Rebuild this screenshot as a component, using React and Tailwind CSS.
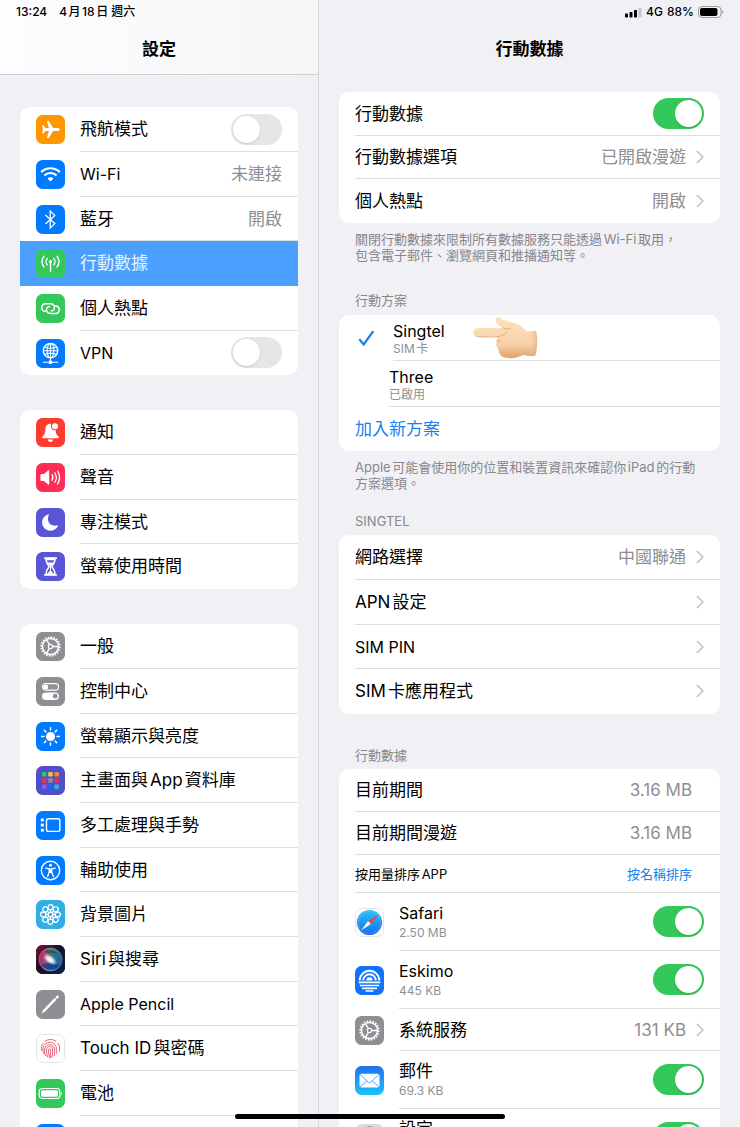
import { useState } from 'react'
import clsx from 'clsx'

const petals = [0, 45, 90, 135, 180, 225, 270, 315]

function Gear() {
  return (
    <g fill="none" stroke="#fff">
      <circle cx="14.5" cy="14.5" r="8" strokeWidth="1.5" />
      <circle cx="14.5" cy="14.5" r="9.4" strokeWidth="1.6" pathLength="80" strokeDasharray="2.2 1.8" />
      <circle cx="14.5" cy="14.5" r="2.1" strokeWidth="1.2" />
      <path d="M16.6 14.5h5.9M13.4 12.7l-2.9-5M13.4 16.3l-2.9 5" strokeWidth="1.3" />
    </g>
  )
}

const icons = {
  airplane: {
    bg: '#ff9500',
    art: <path fill="#fff" d="M24 14.5c0-1-1.3-1.6-2.8-1.6h-4.1L12.8 6h-1.9l2 6.9H9.4l-1.8-2.4H6.1l.9 4-.9 4h1.5l1.8-2.4h3.5l-2 6.9h1.9l4.3-6.9h4.1c1.5 0 2.8-.6 2.8-1.6z" />,
  },
  wifi: {
    bg: '#007aff',
    art: (
      <g fill="none" stroke="#fff" strokeWidth="2.2">
        <path d="M5.2 12.1a13.2 13.2 0 0 1 18.6 0" />
        <path d="M8.4 15.5a8.7 8.7 0 0 1 12.2 0" />
        <path d="M11.5 18.6a4.3 4.3 0 0 1 6 0l-3 3z" fill="#fff" stroke="none" />
      </g>
    ),
  },
  bluetooth: {
    bg: '#007aff',
    art: <path fill="none" stroke="#fff" strokeWidth="1.3" d="M9.4 10.1l9.4 8.5-4.6 4.3V6.1l4.6 4.3-9.4 8.5" />,
  },
  cellular: {
    bg: '#34c759',
    art: (
      <g fill="none" stroke="#fff" strokeWidth="1.4" strokeLinecap="round">
        <circle cx="14.5" cy="12.6" r="1.6" fill="#fff" stroke="none" />
        <path d="M14.5 13v9.2M11.3 9.6a4.4 4.4 0 0 0 0 6.2M17.7 9.6a4.4 4.4 0 0 1 0 6.2M8 7.3a8 8 0 0 0 0 10.6M21 7.3a8 8 0 0 1 0 10.6" />
      </g>
    ),
  },
  hotspot: {
    bg: '#34c759',
    art: (
      <g fill="none" stroke="#fff" strokeWidth="1.5" strokeLinecap="round">
        <path d="M10.2 17.2H8.9a3.8 3.8 0 0 1 0-7.5h5.9a3.8 3.8 0 0 1 3.3 5.6c-.6 1-1.5 1.4-2.6 1.6" />
        <path d="M18.8 12.1h1.3a3.8 3.8 0 0 1 0 7.5h-5.9a3.8 3.8 0 0 1-3.3-5.6c.6-1 1.5-1.4 2.6-1.6" />
      </g>
    ),
  },
  vpn: {
    bg: '#007aff',
    art: (
      <g fill="none" stroke="#fff" strokeWidth="1.1">
        <circle cx="14.5" cy="11.7" r="7.2" strokeWidth="1.4" />
        <ellipse cx="14.5" cy="11.7" rx="3.4" ry="7.2" />
        <path d="M7.3 11.7h14.4M8.6 8c3.6 1.6 8.2 1.6 11.8 0M8.6 15.4c3.6-1.6 8.2-1.6 11.8 0M14.5 4.5v18M6.8 23.3h15.4" />
        <rect x="12.9" y="21.7" width="3.2" height="3.2" fill="#fff" stroke="none" />
      </g>
    ),
  },
  bell: {
    bg: '#ff3b30',
    art: (
      <g fill="#fff">
        <path d="M14.3 5.6c-3.4.4-5 2.8-5 6 0 4.3-1.2 5.4-2.9 7.2-.6.7-.2 1.5.7 1.5h14.8c.9 0 1.3-.8.7-1.5-1.7-1.8-2.9-2.900-2.900-7.200z" />
        <path d="M12 21.6h5c0 1.4-1.1 2.3-2.5 2.3S12 23 12 21.6z" />
        <circle cx="19" cy="8.2" r="4" fill="#ff3b30" />
        <circle cx="19" cy="8.2" r="3" />
      </g>
    ),
  },
  speaker: {
    bg: '#ff2d55',
    art: (
      <g fill="none" stroke="#fff" strokeWidth="1.3" strokeLinecap="round">
        <path d="M4.4 12v5c0 .6.3.9.9.9h2.6l4.3 3.6c.5.4 1 .2 1-.4V7.900c0-.6-.5-.8-1-.4l-4.3 3.6H5.300c-.6 0-.9.3-.9.9z" fill="#fff" stroke="none" />
        <path d="M16 11.7a5 5 0 0 1 0 5.6M18.8 9.8a8.6 8.6 0 0 1 0 9.4M21.6 8a12.4 12.4 0 0 1 0 13" />
      </g>
    ),
  },
  moon: {
    bg: '#5856d6',
    art: <path fill="#fff" d="M12.2 6.2c.4-.2.8.1.6.6-2.7 6.8 1.6 12.3 8.6 10.500.5-.1.8.2.6.6-3 6.3-12 6.3-15 .3-2.200-4.500-.3-10 5.200-12z" />,
  },
  hourglass: {
    bg: '#5856d6',
    art: (
      <g fill="none" stroke="#fff" strokeWidth="1.5" strokeLinejoin="round">
        <path d="M8.8 6.2h11.4M8.8 22.8h11.4" strokeWidth="1.8" strokeLinecap="round" />
        <path d="M10 6.5c0 4.5 1.2 5.7 3.3 8-2.1 2.3-3.3 3.5-3.3 8h9c0-4.5-1.2-5.7-3.3-8 2.1-2.3 3.3-3.5 3.3-8z" />
        <path d="M11.4 10.5h6.2l-3.1 4zM11 21.8l3.5-3.3 3.5 3.3zM10.5 7h8v1.2h-8z" fill="#fff" stroke="none" />
        <path d="M14.5 14v5" strokeWidth="1" />
      </g>
    ),
  },
  gear: { bg: '#8e8e93', art: <Gear /> },
  control: {
    bg: '#8e8e93',
    art: (
      <g>
        <rect x="6.5" y="6.7" width="16" height="6.4" rx="3.2" fill="none" stroke="#fff" strokeWidth="1.2" />
        <circle cx="9.7" cy="9.9" r="2.5" fill="#fff" />
        <rect x="6" y="15.5" width="17" height="7.4" rx="3.7" fill="#fff" />
        <circle cx="19.2" cy="19.2" r="2.4" fill="#8e8e93" />
      </g>
    ),
  },
  sun: {
    bg: '#007aff',
    art: (
      <g fill="#fff" stroke="#fff" strokeWidth="1.5" strokeLinecap="round">
        <circle cx="14.5" cy="14.5" r="3.8" />
        {petals.map((a) => (
          <path key={a} d="M14.5 5.700v2.300" transform={`rotate(${a} 14.5 14.5)`} />
        ))}
      </g>
    ),
  },
  home: {
    bg: '#4f4fce',
    art: (
      <g>
        {['#34c759', '#f7c52b', '#f58a1f', '#ef3340', '#8e8e93', '#f02d55', '#a952dc', '#0a6cff', '#2fb5c4'].map((c, i) => (
          <rect key={c} x={6 + (i % 3) * 6.2} y={6 + Math.floor(i / 3) * 6.2} width="4.6" height="4.6" rx="1" fill={c} />
        ))}
      </g>
    ),
  },
  stage: {
    bg: '#007aff',
    art: (
      <g fill="#fff">
        <rect x="10.5" y="7.8" width="13.4" height="12.6" rx="2" fill="none" stroke="#fff" strokeWidth="1.4" />
        <rect x="4.8" y="7.5" width="3" height="3" rx=".7" />
        <rect x="4.8" y="12.6" width="3" height="3" rx=".7" />
        <rect x="4.8" y="17.7" width="3" height="3" rx=".7" />
      </g>
    ),
  },
  accessibility: {
    bg: '#007aff',
    art: (
      <g fill="none" stroke="#fff" strokeLinecap="round" strokeLinejoin="round">
        <circle cx="14.5" cy="14.5" r="9.2" strokeWidth="1.4" />
        <circle cx="14.5" cy="9.3" r="1.5" fill="#fff" stroke="none" />
        <path d="M9.7 12.1l3.5.7v3.2l-1.600 4.500M19.300 12.100l-3.500.7v3.200l1.600 4.500" strokeWidth="1.3" />
        <path d="M13 12.5h3V17h-3z" fill="#fff" stroke="none" />
      </g>
    ),
  },
  wallpaper: {
    bg: '#32ade6',
    art: (
      <g fill="none" stroke="#fff" strokeWidth="1.3">
        <circle cx="14.5" cy="14.5" r="2.3" />
        {petals.map((a) => (
          <ellipse key={a} cx="14.5" cy="7.2" rx="2.5" ry="2.6" transform={`rotate(${a} 14.5 14.5)`} />
        ))}
        {petals.map((a) => (
          <path key={a} d="M14.5 10.1v2" transform={`rotate(${a} 14.5 14.5)`} />
        ))}
      </g>
    ),
  },
  siri: {
    bg: '#140f24',
    art: (
      <g>
        <defs>
          <clipPath id="siriClip"><rect width="29" height="29" rx="6.5" /></clipPath>
          <linearGradient id="siriBack" x1="0" y1="0" x2="1" y2="1">
            <stop offset="0" stopColor="#7d1038" />
            <stop offset=".45" stopColor="#1a1226" />
            <stop offset="1" stopColor="#06264a" />
          </linearGradient>
          <linearGradient id="siriOrb" x1="0" y1=".4" x2="1" y2=".6">
            <stop offset="0" stopColor="#d02565" />
            <stop offset=".35" stopColor="#b0688c" />
            <stop offset=".6" stopColor="#2f8f8e" />
            <stop offset="1" stopColor="#1b63c9" />
          </linearGradient>
          <radialGradient id="siriGlow">
            <stop offset="0" stopColor="#fff" />
            <stop offset=".4" stopColor="#fff" stopOpacity=".85" />
            <stop offset="1" stopColor="#fff" stopOpacity="0" />
          </radialGradient>
        </defs>
        <g clipPath="url(#siriClip)">
          <rect width="29" height="29" fill="url(#siriBack)" />
          <circle cx="14.5" cy="14.5" r="11.5" fill="url(#siriOrb)" opacity=".85" />
          <path d="M5 20c5 6 14 6 19 0-6 0-12-4-19 0z" fill="#123a9c" opacity=".8" />
          <path d="M8 7c4-3 10-3 14 2-5-1-9 0-14-2z" fill="#0d5c4b" opacity=".8" />
          <ellipse cx="14" cy="14.5" rx="8" ry="4.2" fill="url(#siriGlow)" transform="rotate(35 14 14.5)" />
          <circle cx="14.5" cy="14.5" r="11.5" fill="none" stroke="#b9b6c8" strokeWidth=".6" opacity=".7" />
        </g>
      </g>
    ),
  },
  pencil: {
    bg: '#8e8e93',
    art: (
      <g stroke="#fff" strokeLinecap="round">
        <path d="M8 20.8L19 9.4" strokeWidth="2.4" />
        <path d="M20.8 7.6l.9-.9" strokeWidth="2.4" />
        <path d="M6.4 22.5l1.6-1.7" strokeWidth="1.2" />
      </g>
    ),
  },
  touchid: {
    bg: '#ffffff',
    border: true,
    art: (
      <g fill="none" stroke="#ee5d78" strokeWidth="1" strokeLinecap="round">
        <path d="M9 7.2a9 9 0 0 1 11 0M5.6 16.5c-.8-2.5-.3-5.2 1.6-7.4M7.6 19.5c-1.3-4.5-.8-7.8 2.2-9.9 3.6-2.4 8.6-1.2 10.2 3 .5 1.5.6 3.6.4 6.700M22 9.400c1.600 2.300 1.900 4.500 1.500 7.800" />
        <path d="M9.500 21.600c-1-3-1.600-6.200-.2-8.600 2-3.200 6.700-3 8.500.1 1.200 2.200.9 5.600.4 8.600" />
        <path d="M11.600 22.900c-.8-2.700-1.700-5.800-.9-8.300 1-2.600 4.600-2.800 5.600-.3.7 2 .3 6-.4 9.100" />
        <path d="M13.700 23.700c-.5-2.300-1.400-5.400-1.200-7.900.2-1.400 1.900-1.300 2.100 0 .2 2 .1 4.600-.2 7.600" />
      </g>
    ),
  },
  battery: {
    bg: '#34c759',
    art: (
      <g fill="#fff">
        <rect x="3.2" y="9.5" width="20.6" height="10" rx="3" fill="none" stroke="#fff" strokeWidth="1.2" />
        <rect x="5" y="11.3" width="17" height="6.4" rx="1.5" />
        <path d="M24.9 12.5c1.3.5 1.3 3.5 0 4z" />
      </g>
    ),
  },
  privacy: { bg: '#007aff', art: null },
  safari: {
    bg: '#ffffff',
    border: true,
    art: (
      <g>
        <defs>
          <linearGradient id="safariSky" x1="0" y1="0" x2="0" y2="1">
            <stop offset="0" stopColor="#27c4f5" />
            <stop offset="1" stopColor="#1a6bf0" />
          </linearGradient>
        </defs>
        <circle cx="14.5" cy="14.5" r="12.6" fill="url(#safariSky)" />
        <circle cx="14.5" cy="14.5" r="11" fill="none" stroke="#fff" strokeWidth="1.2" opacity=".55" pathLength="120" strokeDasharray=".7 2.3" />
        <path d="M22.8 7l-9.7 6.1 2.7 2.8z" fill="#f0413a" />
        <path d="M6.4 22.3l6.7-9.2 2.7 2.8z" fill="#fff" />
      </g>
    ),
  },
  eskimo: {
    bg: '#0f74fb',
    art: (
      <g fill="none" stroke="#fff" strokeWidth="1.9">
        <path d="M4.7 14.5a9.8 9.8 0 0 1 19.6 0M8.2 14.5a6.3 6.3 0 0 1 12.6 0" />
        <path d="M11.3 14.5a3.2 3.2 0 0 1 6.4 0z" fill="#fff" stroke="none" />
        <path d="M3.7 16.4h21.6M4.800 19.500h19.400M7 22.400h15M10.500 25h8" strokeWidth="1.7" />
      </g>
    ),
  },
  mail: {
    bg: 'url(#mailSky)',
    art: (
      <g>
        <defs>
          <linearGradient id="mailSky" x1="0" y1="0" x2="0" y2="1">
            <stop offset="0" stopColor="#1d70f2" />
            <stop offset="1" stopColor="#19c5fb" />
          </linearGradient>
        </defs>
        <rect x="4.500" y="7.800" width="20" height="13.800" rx="1.800" fill="#fff" />
        <path d="M5 8.500l8 7.400c.9.800 2.100.8 3 0l8-7.400M5 21l6.900-6.300M24 21l-6.900-6.300" fill="none" stroke="#3f9df5" strokeWidth=".9" />
      </g>
    ),
  },
  settings: {
    bg: '#dcdce0',
    art: (
      <g fill="none" stroke="#3a3a3c">
        <circle cx="14.500" cy="14.500" r="10.500" strokeWidth="3" />
        <circle cx="14.500" cy="14.500" r="5" strokeWidth="1.500" />
      </g>
    ),
  },
}

function Icon({ name }) {
  const { bg, art, border } = icons[name]
  return (
    <svg viewBox="0 0 29 29" className="size-[29px] shrink-0" aria-hidden="true">
      {border ? (
        <rect x=".5" y=".5" width="28" height="28" rx="6" fill={bg} stroke="#e6e6e8" />
      ) : (
        <rect width="29" height="29" rx="6.5" fill={bg} />
      )}
      {art}
    </svg>
  )
}

function Toggle({ id, on }) {
  const [checked, setChecked] = useState(Boolean(on))
  return (
    <input id={id} type="checkbox" role="switch" checked={checked} onChange={(e) => setChecked(e.target.checked)}
      className="h-[31px] w-[51px] shrink-0 cursor-pointer appearance-none rounded-full bg-[#e6e6e8] before:m-0.5 before:block before:size-[27px] before:rounded-full before:bg-white before:shadow-sm checked:bg-[#34c759] checked:before:ml-[22px]" />
  )
}

function Chevron() {
  return (
    <svg viewBox="0 0 8 14" className="ml-2.5 h-3.5 w-2 shrink-0" aria-hidden="true">
      <path d="M.9 1l6 6-6 6" fill="none" stroke="#c2c2c6" strokeWidth="1.6" />
    </svg>
  )
}

const sidebar = [
  [
    { icon: 'airplane', label: '飛航模式', toggle: 'airplane-mode' },
    { icon: 'wifi', label: 'Wi-Fi', latin: true, value: '未連接' },
    { icon: 'bluetooth', label: '藍牙', value: '開啟' },
    { icon: 'cellular', label: '行動數據', active: true },
    { icon: 'hotspot', label: '個人熱點' },
    { icon: 'vpn', label: 'VPN', latin: true, toggle: 'vpn' },
  ],
  [
    { icon: 'bell', label: '通知' },
    { icon: 'speaker', label: '聲音' },
    { icon: 'moon', label: '專注模式' },
    { icon: 'hourglass', label: '螢幕使用時間' },
  ],
  [
    { icon: 'gear', label: '一般' },
    { icon: 'control', label: '控制中心' },
    { icon: 'sun', label: '螢幕顯示與亮度' },
    { icon: 'home', label: '主畫面與App資料庫' },
    { icon: 'stage', label: '多工處理與手勢' },
    { icon: 'accessibility', label: '輔助使用' },
    { icon: 'wallpaper', label: '背景圖片' },
    { icon: 'siri', label: 'Siri與搜尋' },
    { icon: 'pencil', label: 'Apple Pencil', latin: true },
    { icon: 'touchid', label: 'Touch ID與密碼' },
    { icon: 'battery', label: '電池' },
    { icon: 'privacy' },
  ],
]

function SidebarRow({ item }) {
  const Row = item.toggle ? 'label' : 'a'
  const target = item.toggle ? { htmlFor: item.toggle } : { href: '#' }
  return (
    <li className={clsx('group h-[45px] nth-[3n]:h-11', item.active && 'bg-[#4ba0ff]')}>
      <Row {...target} className="flex h-full items-center gap-[15px] pl-4">
        <Icon name={item.icon} />
        <span className={clsx('flex h-full min-w-0 flex-1 items-center justify-between border-b pr-4 group-last:border-transparent',
          item.active ? 'border-transparent text-[#e6f2ff]' : 'border-[#dededf]')}>
          <span className={clsx(item.latin && 'text-base')}>{item.label}</span>
          {item.value ? <span className="text-[#8e8e93]">{item.value}</span> : null}
          {item.toggle ? <Toggle id={item.toggle} /> : null}
        </span>
      </Row>
    </li>
  )
}

function Card({ children }) {
  return <ul className="shrink-0 overflow-hidden rounded-[10px] bg-white">{children}</ul>
}

function LinkRow({ label, value, className }) {
  return (
    <li className={clsx('group pl-4', className)}>
      <a href="#" className="flex h-full items-center border-b border-[#dededf] pr-4 group-last:border-transparent">
        <span className="flex-1">{label}</span>
        {value ? <span className="text-[#8e8e93]">{value}</span> : null}
        <Chevron />
      </a>
    </li>
  )
}

function UsageRow({ label, value }) {
  return (
    <li className="h-[43px] pl-4">
      <div className="flex h-full items-center justify-between border-b border-[#dededf] pr-7">
        <span>{label}</span>
        <span className="text-[#8e8e93]">{value}</span>
      </div>
    </li>
  )
}

function AppRow({ icon, name, size, latin }) {
  return (
    <li className="h-[58px] pl-4">
      <label htmlFor={icon} className="flex h-full items-center gap-[15px]">
        <Icon name={icon} />
        <span className="flex h-full flex-1 items-center justify-between border-b border-[#dededf] pr-4">
          <span>
            <span className={clsx('block leading-[22px]', latin && 'text-base')}>{name}</span>
            <span className="block h-[18px] text-xs leading-[18px] text-[#8e8e93]">{size}</span>
          </span>
          <Toggle id={icon} on />
        </span>
      </label>
    </li>
  )
}

function PointingHand() {
  return (
    <svg viewBox="0 0 66 44" className="ml-7 h-11 w-[66px] shrink-0" aria-hidden="true">
      <defs>
        <linearGradient id="skin" x1="0" y1="0" x2="0" y2="1">
          <stop offset="0" stopColor="#fde0bd" />
          <stop offset=".65" stopColor="#f8d3aa" />
          <stop offset="1" stopColor="#e0a06c" />
        </linearGradient>
        <linearGradient id="wrist" x1="0" y1="0" x2="1" y2="0">
          <stop offset="0" stopColor="#f8d3aa" stopOpacity="0" />
          <stop offset="1" stopColor="#d89a68" />
        </linearGradient>
      </defs>
      <path d="M3 12.500c6-1.200 13-1 20.500-.3L30 12c-3-1.600-6-3.700-7.300-6.600C21.400 2.300 24 .2 27 2c5.500 3.600 12 3.800 18 6.200 3.700 1.500 6.500 5.800 9.500 7.200l8.300-.6c2 4.800 2 17-.5 24.400-4 2-7.500 0-12.300-.3-4.500 2.600-10.500 3.900-16 2.900-5.500-.6-8-3-8.500-8-2.300-3-2.700-6-1.700-9-.3-2 .2-3 1.200-4.300-7 .5-14.500.5-21 .2-4.500-.5-4.700-7-1-8.200z" fill="url(#skin)" />
      <path d="M55 15.400l7.800-.6c2 4.800 2 17-.5 24.400-2.700 1.300-5 1-7.300.5 1.500-8 1.600-16 0-24.300z" fill="url(#wrist)" opacity=".5" />
      <path d="M25 20.500c3.500-.5 6.500-1.500 8.500-4.300M24 25c1 .3 2.300.1 3.500-.5M30 12c2.500 1 5 1.200 7.500.7M4 20.700c7 .5 14 .4 20.500.1" fill="none" stroke="#d79a66" strokeWidth=".9" strokeLinecap="round" opacity=".8" />
    </svg>
  )
}

function Signal() {
  return (
    <svg viewBox="0 0 17 11" className="h-[11px] w-[17px]" aria-hidden="true">
      <rect x="0" y="6.500" width="3" height="4" rx=".8" />
      <rect x="4.500" y="5" width="3" height="5.500" rx=".8" />
      <rect x="9" y="3" width="3" height="7.500" rx=".8" />
      <rect x="13.500" y=".5" width="3" height="10" rx=".8" fill="#c7c7cb" />
    </svg>
  )
}

function Battery() {
  return (
    <svg viewBox="0 0 26 12" className="h-3 w-[26px]" aria-hidden="true">
      <rect x=".5" y=".5" width="22.500" height="11" rx="3.500" fill="none" stroke="#9a9a9e" />
      <rect x="2" y="2" width="17.500" height="8" rx="2" />
      <path d="M24.200 4c1.600.6 1.600 3.400 0 4z" fill="#9a9a9e" />
    </svg>
  )
}

function Note({ children }) {
  return <p className="px-4 pt-2 text-[13px] leading-4 text-[#87878c]">{children}</p>
}

function Heading({ children, className }) {
  return <h2 className={clsx('px-4 text-[13px] leading-4 text-[#87878c]', className)}>{children}</h2>
}

export default function App() {
  return (
    <div lang="zh-Hant" className="flex h-screen overflow-hidden bg-[#f1f0f5] font-['Inter','Noto_Sans_CJK_TC',sans-serif] text-[17px] leading-6 text-black [text-autospace:normal]">
      <aside className="flex w-[319px] shrink-0 flex-col border-r border-[#d8d8dc]">
        <header className="h-[75px] shrink-0 border-b border-[#d0d0d4] bg-linear-to-r from-[#fdfdff] to-[#f6f6f7]">
          <div className="flex h-6 items-center gap-3 px-4 text-xs font-medium">
            <time>13:24</time>
            <span>4月18日 週六</span>
          </div>
          <h1 className="pt-[13px] text-center font-semibold">設定</h1>
        </header>
        <nav className="flex min-h-0 flex-1 flex-col gap-[35px] overflow-y-auto px-5 pt-8 [scrollbar-width:none]">
          {sidebar.map((items) => (
            <Card key={items[0].icon}>
              {items.map((item) => <SidebarRow key={item.icon} item={item} />)}
            </Card>
          ))}
        </nav>
      </aside>

      <main className="flex min-w-0 flex-1 flex-col">
        <header className="h-[75px] shrink-0">
          <div className="flex h-6 items-center justify-end gap-1 px-4 text-xs font-medium">
            <Signal />
            <span>4G</span>
            <span>88%</span>
            <Battery />
          </div>
          <h1 className="pt-[13px] text-center font-semibold">行動數據</h1>
        </header>

        <div className="flex min-h-0 flex-1 flex-col overflow-y-auto px-5 pt-[17px] [scrollbar-width:none]">
          <Card>
            <li className="h-11 pl-4">
              <label htmlFor="cellular-data" className="flex h-full items-center justify-between border-b border-[#dededf] pr-4">
                行動數據
                <Toggle id="cellular-data" on />
              </label>
            </li>
            <LinkRow label="行動數據選項" value="已開啟漫遊" className="h-[43px]" />
            <LinkRow label="個人熱點" value="開啟" className="h-11" />
          </Card>
          <Note>關閉行動數據來限制所有數據服務只能透過Wi-Fi取用，<br />包含電子郵件、瀏覽網頁和推播通知等。</Note>

          <Heading className="pt-[29px] pb-[7px]">行動方案</Heading>
          <Card>
            <li className="h-[46px]">
              <button type="button" className="flex h-full w-full items-center pl-4 text-left">
                <svg viewBox="0 0 22 22" className="mr-4 size-[22px] shrink-0" aria-hidden="true">
                  <path d="M4.300 12.300l4.400 5.200 9.600-13.300" fill="none" stroke="#1a7fee" strokeWidth="2.200" />
                </svg>
                <span className="flex h-full flex-1 items-center border-b border-[#dededf]">
                  <span className="pt-0.5">
                    <span className="block text-base leading-5">Singtel</span>
                    <span className="block text-xs leading-4 text-[#8e8e93]">SIM卡</span>
                  </span>
                  <PointingHand />
                </span>
              </button>
            </li>
            <li className="h-[46px] pl-[50px]">
              <button type="button" className="h-full w-full border-b border-[#dededf] pt-0.5 text-left">
                <span className="block text-base leading-5">Three</span>
                <span className="block text-xs leading-4 text-[#8e8e93]">已啟用</span>
              </button>
            </li>
            <li className="h-11">
              <button type="button" className="h-full w-full pl-4 text-left text-[#1a7fee]">加入新方案</button>
            </li>
          </Card>
          <Note>Apple可能會使用你的位置和裝置資訊來確認你iPad的行動方案選項。</Note>

          <Heading className="pt-[22px] pb-[6px]">SINGTEL</Heading>
          <Card>
            <LinkRow label="網路選擇" value="中國聯通" className="h-[45px]" />
            <LinkRow label="APN設定" className="h-[45px]" />
            <LinkRow label="SIM PIN" className="h-11 text-base" />
            <LinkRow label="SIM卡應用程式" className="h-[45px]" />
          </Card>

          <Heading className="pt-[33px] pb-[6px]">行動數據</Heading>
          <Card>
            <UsageRow label="目前期間" value="3.16 MB" />
            <UsageRow label="目前期間漫遊" value="3.16 MB" />
            <li className="h-[38px] pl-4 text-[13px]">
              <div className="flex h-full items-center justify-between border-b border-[#dededf] pr-7">
                <span>按用量排序APP</span>
                <button type="button" className="text-[#1a7fee]">按名稱排序</button>
              </div>
            </li>
            <AppRow icon="safari" name="Safari" size="2.50 MB" latin />
            <AppRow icon="eskimo" name="Eskimo" size="445 KB" latin />
            <li className="h-[42px] pl-4">
              <a href="#" className="flex h-full items-center gap-[15px]">
                <Icon name="gear" />
                <span className="flex h-full flex-1 items-center border-b border-[#dededf] pr-4">
                  <span className="flex-1">系統服務</span>
                  <span className="text-[#8e8e93]">131 KB</span>
                  <Chevron />
                </span>
              </a>
            </li>
            <AppRow icon="mail" name="郵件" size="69.3 KB" />
            <AppRow icon="settings" name="設定" />
          </Card>
        </div>
      </main>

      <div className="fixed bottom-2 left-1/2 -ml-[135px] h-[5px] w-[270px] rounded-full bg-black" />
    </div>
  )
}
